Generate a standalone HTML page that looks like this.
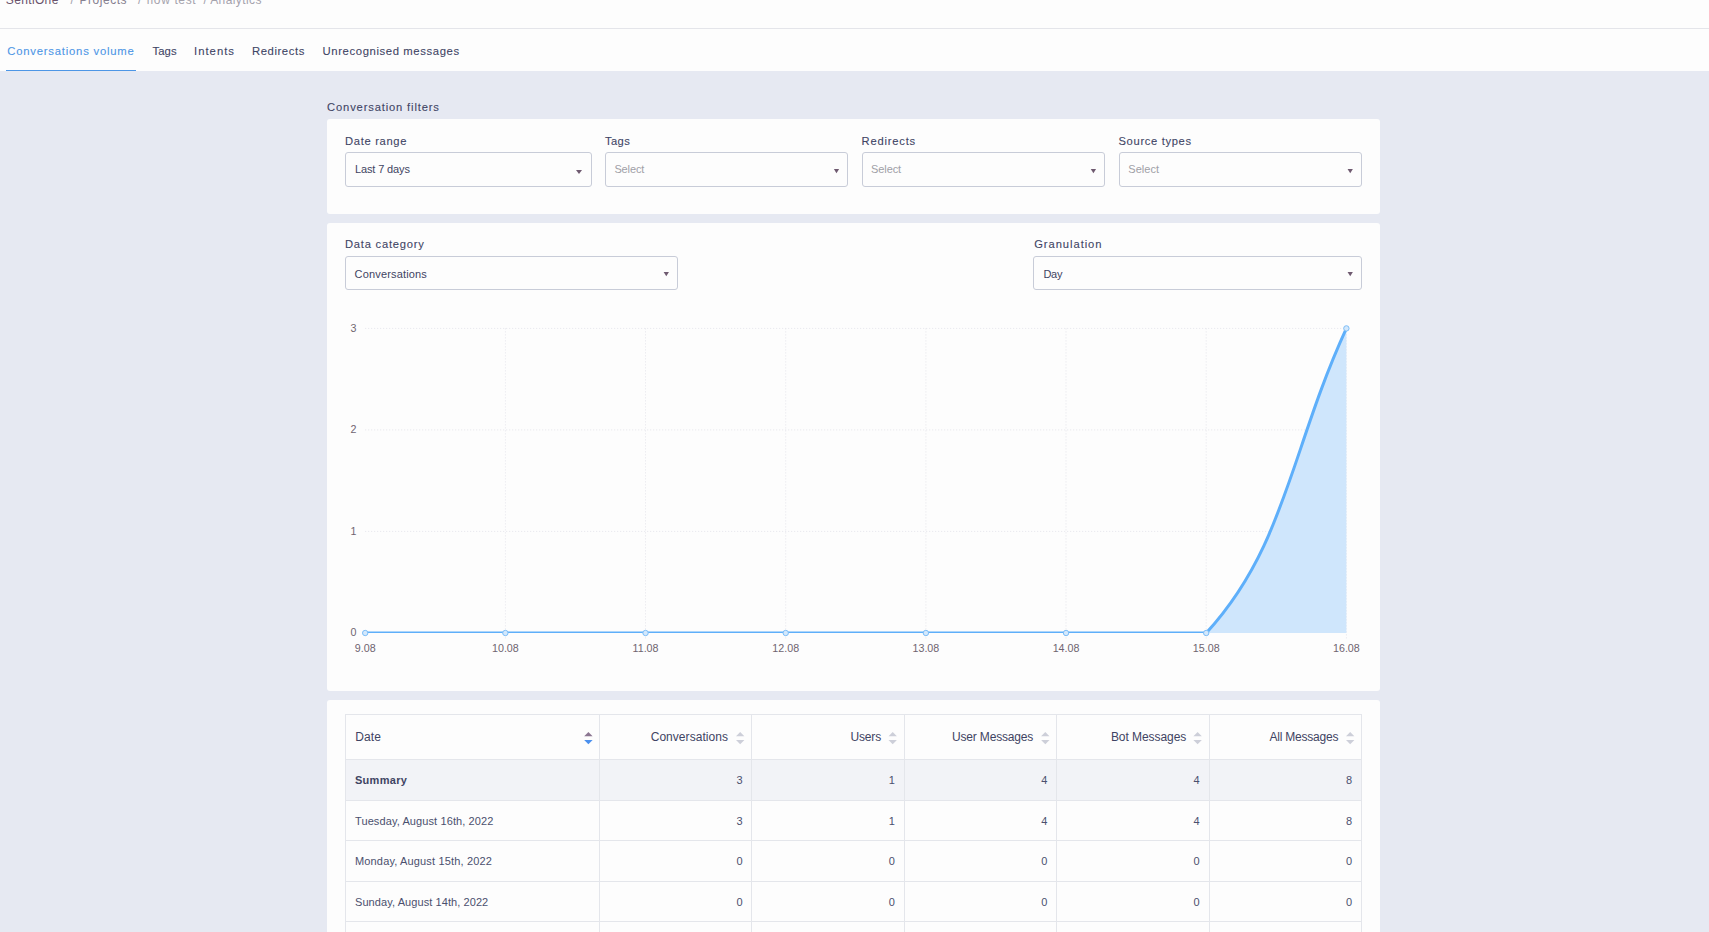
<!DOCTYPE html>
<html lang="en"><head><meta charset="utf-8"><title>Analytics</title>
<style>
html,body{margin:0;padding:0;}
body{width:1709px;height:932px;overflow:hidden;background:#e6e9f2;font-family:'Liberation Sans', sans-serif;position:relative;}
.b{position:absolute;}
.sel{border:1px solid #c8ccd8;border-radius:3px;background:#fdfdfd;}
.t{position:absolute;white-space:nowrap;line-height:20px;}
svg{position:absolute;left:0;top:0;}
</style></head>
<body>
<div class="b" style="left:0px;top:0px;width:1709px;height:71px;background:#fdfdfd;"></div>
<div class="b" style="left:0px;top:28px;width:1709px;height:1px;background:#e4e5ea;"></div>
<div class="b" style="left:6px;top:69.5px;width:130px;height:1.5px;background:#4d96e6;"></div>
<div class="b" style="left:327px;top:119px;width:1053px;height:95px;background:#fdfdfd;border-radius:3px;"></div>
<div class="b" style="left:327px;top:223px;width:1053px;height:468px;background:#fdfdfd;border-radius:3px;"></div>
<div class="b" style="left:327px;top:700px;width:1053px;height:260px;background:#fdfdfd;border-radius:3px;"></div>
<div class="b sel" style="left:345px;top:152px;width:245px;height:33px;"></div>
<div class="b sel" style="left:605px;top:152px;width:241px;height:33px;"></div>
<div class="b sel" style="left:862px;top:152px;width:241px;height:33px;"></div>
<div class="b sel" style="left:1119px;top:152px;width:241px;height:33px;"></div>
<div class="b sel" style="left:345px;top:256px;width:331px;height:32px;"></div>
<div class="b sel" style="left:1033px;top:256px;width:327px;height:32px;"></div>
<div class="b" style="left:346px;top:760px;width:1015px;height:40px;background:#f2f3f7;"></div>
<div class="b" style="left:345px;top:714px;width:1017px;height:1px;background:#e4e6eb;"></div>
<div class="b" style="left:345px;top:759px;width:1017px;height:1px;background:#e4e6eb;"></div>
<div class="b" style="left:345px;top:800px;width:1017px;height:1px;background:#e4e6eb;"></div>
<div class="b" style="left:345px;top:840px;width:1017px;height:1px;background:#e4e6eb;"></div>
<div class="b" style="left:345px;top:881px;width:1017px;height:1px;background:#e4e6eb;"></div>
<div class="b" style="left:345px;top:921px;width:1017px;height:1px;background:#e4e6eb;"></div>
<div class="b" style="left:345px;top:714px;width:1px;height:246px;background:#e4e6eb;"></div>
<div class="b" style="left:599px;top:714px;width:1px;height:246px;background:#e4e6eb;"></div>
<div class="b" style="left:751px;top:714px;width:1px;height:246px;background:#e4e6eb;"></div>
<div class="b" style="left:904px;top:714px;width:1px;height:246px;background:#e4e6eb;"></div>
<div class="b" style="left:1056px;top:714px;width:1px;height:246px;background:#e4e6eb;"></div>
<div class="b" style="left:1209px;top:714px;width:1px;height:246px;background:#e4e6eb;"></div>
<div class="b" style="left:1361px;top:714px;width:1px;height:246px;background:#e4e6eb;"></div>
<svg width="1709" height="932" viewBox="0 0 1709 932">
<path d="M576.00 169.9h6l-3.00 4.2z" fill="#6f5a70"/>
<path d="M833.85 169h5.3l-2.65 4.3z" fill="#6f5a70"/>
<path d="M1090.75 169h5.3l-2.65 4.3z" fill="#6f5a70"/>
<path d="M1347.55 169h5.3l-2.65 4.3z" fill="#6f5a70"/>
<path d="M663.65 271.9h5.3l-2.65 4.3z" fill="#6f5a70"/>
<path d="M1347.55 271.9h5.3l-2.65 4.3z" fill="#6f5a70"/>
<path d="M365.2 328.4H1346.4" stroke="#e4e4ea" stroke-width="1" stroke-dasharray="1 2" fill="none"/>
<path d="M365.2 429.9H1346.4" stroke="#e4e4ea" stroke-width="1" stroke-dasharray="1 2" fill="none"/>
<path d="M365.2 531.4H1346.4" stroke="#e4e4ea" stroke-width="1" stroke-dasharray="1 2" fill="none"/>
<path d="M505.4 328.4V640.0" stroke="#e4e4ea" stroke-width="1" stroke-dasharray="1 2" fill="none"/>
<path d="M645.5 328.4V640.0" stroke="#e4e4ea" stroke-width="1" stroke-dasharray="1 2" fill="none"/>
<path d="M785.7 328.4V640.0" stroke="#e4e4ea" stroke-width="1" stroke-dasharray="1 2" fill="none"/>
<path d="M925.9 328.4V640.0" stroke="#e4e4ea" stroke-width="1" stroke-dasharray="1 2" fill="none"/>
<path d="M1066.0 328.4V640.0" stroke="#e4e4ea" stroke-width="1" stroke-dasharray="1 2" fill="none"/>
<path d="M1206.2 328.4V640.0" stroke="#e4e4ea" stroke-width="1" stroke-dasharray="1 2" fill="none"/>
<path d="M1346.4 328.4V640.0" stroke="#e4e4ea" stroke-width="1" stroke-dasharray="1 2" fill="none"/>
<clipPath id="cl"><rect x="360.2" y="323.4" width="991.1899999999998" height="309.6"/></clipPath>
<path d="M1206.22 633.00C1285.30 547.08 1290.32 450.24 1346.39 328.40V633z" fill="#cfe6fc"/>
<path d="M365.20 633H1206.22C1285.30 547.08 1290.32 450.24 1346.39 328.40" fill="none" stroke="#5eaffa" stroke-width="3" stroke-linejoin="round" clip-path="url(#cl)"/>
<circle cx="365.20" cy="633" r="2.7" fill="#d3e8fc" stroke="#7dbef7" stroke-width="1"/>
<circle cx="505.37" cy="633" r="2.7" fill="#d3e8fc" stroke="#7dbef7" stroke-width="1"/>
<circle cx="645.54" cy="633" r="2.7" fill="#d3e8fc" stroke="#7dbef7" stroke-width="1"/>
<circle cx="785.71" cy="633" r="2.7" fill="#d3e8fc" stroke="#7dbef7" stroke-width="1"/>
<circle cx="925.88" cy="633" r="2.7" fill="#d3e8fc" stroke="#7dbef7" stroke-width="1"/>
<circle cx="1066.05" cy="633" r="2.7" fill="#d3e8fc" stroke="#7dbef7" stroke-width="1"/>
<circle cx="1206.22" cy="633" r="2.7" fill="#d3e8fc" stroke="#7dbef7" stroke-width="1"/>
<circle cx="1346.39" cy="328.4" r="2.7" fill="#d3e8fc" stroke="#7dbef7" stroke-width="1"/>
<path d="M584.20 736.2h8.4l-4.20 -4.2z" fill="#8b7691"/>
<path d="M584.20 740h8.4l-4.20 4.2z" fill="#4b90ee"/>
<path d="M736.00 736.2h8.4l-4.20 -4.2z" fill="#cdcfd9"/>
<path d="M736.00 740h8.4l-4.20 4.2z" fill="#cdcfd9"/>
<path d="M888.50 736.2h8.4l-4.20 -4.2z" fill="#cdcfd9"/>
<path d="M888.50 740h8.4l-4.20 4.2z" fill="#cdcfd9"/>
<path d="M1041.10 736.2h8.4l-4.20 -4.2z" fill="#cdcfd9"/>
<path d="M1041.10 740h8.4l-4.20 4.2z" fill="#cdcfd9"/>
<path d="M1193.40 736.2h8.4l-4.20 -4.2z" fill="#cdcfd9"/>
<path d="M1193.40 740h8.4l-4.20 4.2z" fill="#cdcfd9"/>
<path d="M1346.00 736.2h8.4l-4.20 -4.2z" fill="#cdcfd9"/>
<path d="M1346.00 740h8.4l-4.20 4.2z" fill="#cdcfd9"/>
</svg>
<span class="t" style="font-size:12px;color:#6a536c;top:-10.00px;left:5.80px;letter-spacing:0.356px;">SentiOne</span>
<span class="t" style="font-size:12px;color:#a5a3ad;top:-10.00px;left:70.40px;letter-spacing:0.756px;">/</span>
<span class="t" style="font-size:12px;color:#85808f;top:-10.00px;left:79.40px;letter-spacing:0.549px;">Projects</span>
<span class="t" style="font-size:12px;color:#a5a3ad;top:-10.00px;left:138.10px;letter-spacing:1.200px;">/</span>
<span class="t" style="font-size:12px;color:#a5a3ad;top:-10.00px;left:146.60px;letter-spacing:0.623px;">flow test</span>
<span class="t" style="font-size:12px;color:#a5a3ad;top:-10.00px;left:203.40px;letter-spacing:-0.600px;">/</span>
<span class="t" style="font-size:12px;color:#a5a3ad;top:-10.00px;left:210.20px;letter-spacing:0.416px;">Analytics</span>
<span class="t" style="font-size:11.3px;color:#4d96e6;top:41.00px;-webkit-text-stroke:0.1px #4d96e6;left:7.30px;letter-spacing:0.775px;">Conversations volume</span>
<span class="t" style="font-size:11.3px;color:#3f4565;top:41.00px;-webkit-text-stroke:0.1px #3f4565;left:152.42px;letter-spacing:0.135px;">Tags</span>
<span class="t" style="font-size:11.3px;color:#3f4565;top:41.00px;-webkit-text-stroke:0.1px #3f4565;left:194.00px;letter-spacing:1.013px;">Intents</span>
<span class="t" style="font-size:11.3px;color:#3f4565;top:41.00px;-webkit-text-stroke:0.1px #3f4565;left:251.90px;letter-spacing:0.593px;">Redirects</span>
<span class="t" style="font-size:11.3px;color:#3f4565;top:41.00px;-webkit-text-stroke:0.1px #3f4565;left:322.60px;letter-spacing:0.608px;">Unrecognised messages</span>
<span class="t" style="font-size:11.2px;color:#3f4565;top:97.00px;-webkit-text-stroke:0.1px #3f4565;left:327.10px;letter-spacing:0.845px;">Conversation filters</span>
<span class="t" style="font-size:11.2px;color:#3f4565;top:131.00px;-webkit-text-stroke:0.1px #3f4565;left:345.00px;letter-spacing:0.678px;">Date range</span>
<span class="t" style="font-size:11.2px;color:#3f4565;top:131.00px;-webkit-text-stroke:0.1px #3f4565;left:604.90px;letter-spacing:0.453px;">Tags</span>
<span class="t" style="font-size:11.2px;color:#3f4565;top:131.00px;-webkit-text-stroke:0.1px #3f4565;left:861.60px;letter-spacing:0.792px;">Redirects</span>
<span class="t" style="font-size:11.2px;color:#3f4565;top:131.00px;-webkit-text-stroke:0.1px #3f4565;left:1118.50px;letter-spacing:0.658px;">Source types</span>
<span class="t" style="font-size:11px;color:#3f4463;top:159.00px;left:355.00px;letter-spacing:-0.129px;">Last 7 days</span>
<span class="t" style="font-size:11px;color:#a0a0a7;top:159.00px;left:614.40px;letter-spacing:-0.116px;">Select</span>
<span class="t" style="font-size:11px;color:#a0a0a7;top:159.00px;left:871.10px;letter-spacing:-0.116px;">Select</span>
<span class="t" style="font-size:11px;color:#a0a0a7;top:159.00px;left:1128.30px;letter-spacing:0.044px;">Select</span>
<span class="t" style="font-size:11.2px;color:#3f4565;top:234.00px;-webkit-text-stroke:0.1px #3f4565;left:344.90px;letter-spacing:0.779px;">Data category</span>
<span class="t" style="font-size:11.2px;color:#3f4565;top:234.00px;-webkit-text-stroke:0.1px #3f4565;left:1034.22px;letter-spacing:0.944px;">Granulation</span>
<span class="t" style="font-size:11px;color:#3f4463;top:264.00px;left:354.60px;letter-spacing:0.164px;">Conversations</span>
<span class="t" style="font-size:11px;color:#3f4463;top:264.00px;left:1043.40px;letter-spacing:-0.281px;">Day</span>
<span class="t" style="font-size:12px;color:#3f4463;top:727.00px;left:355.20px;letter-spacing:0.147px;">Date</span>
<span class="t" style="font-size:12px;color:#3f4463;top:727.00px;left:650.70px;letter-spacing:0.043px;">Conversations</span>
<span class="t" style="font-size:12px;color:#3f4463;top:727.00px;left:850.60px;letter-spacing:-0.201px;">Users</span>
<span class="t" style="font-size:12px;color:#3f4463;top:727.00px;left:952.00px;letter-spacing:-0.168px;">User Messages</span>
<span class="t" style="font-size:12px;color:#3f4463;top:727.00px;left:1110.90px;letter-spacing:-0.059px;">Bot Messages</span>
<span class="t" style="font-size:12px;color:#3f4463;top:727.00px;left:1269.40px;letter-spacing:-0.207px;">All Messages</span>
<span class="t" style="font-size:11px;color:#3f4463;top:770.00px;font-weight:700;left:355px;letter-spacing:0.280px;">Summary</span>
<span class="t" style="font-size:11px;color:#4b506e;top:811.00px;left:355px;letter-spacing:0.104px;">Tuesday, August 16th, 2022</span>
<span class="t" style="font-size:11px;color:#4b506e;top:851.00px;left:355px;letter-spacing:0.154px;">Monday, August 15th, 2022</span>
<span class="t" style="font-size:11px;color:#4b506e;top:892.00px;left:355px;letter-spacing:0.081px;">Sunday, August 14th, 2022</span>
<span class="t" style="font-size:11px;color:#4b506e;top:770.00px;left:736.57px;">3</span>
<span class="t" style="font-size:11px;color:#4b506e;top:770.00px;left:888.77px;">1</span>
<span class="t" style="font-size:11px;color:#4b506e;top:770.00px;left:1041.17px;">4</span>
<span class="t" style="font-size:11px;color:#4b506e;top:770.00px;left:1193.47px;">4</span>
<span class="t" style="font-size:11px;color:#4b506e;top:770.00px;left:1345.97px;">8</span>
<span class="t" style="font-size:11px;color:#4b506e;top:811.00px;left:736.57px;">3</span>
<span class="t" style="font-size:11px;color:#4b506e;top:811.00px;left:888.77px;">1</span>
<span class="t" style="font-size:11px;color:#4b506e;top:811.00px;left:1041.17px;">4</span>
<span class="t" style="font-size:11px;color:#4b506e;top:811.00px;left:1193.47px;">4</span>
<span class="t" style="font-size:11px;color:#4b506e;top:811.00px;left:1345.97px;">8</span>
<span class="t" style="font-size:11px;color:#4b506e;top:851.00px;left:736.57px;">0</span>
<span class="t" style="font-size:11px;color:#4b506e;top:851.00px;left:888.77px;">0</span>
<span class="t" style="font-size:11px;color:#4b506e;top:851.00px;left:1041.17px;">0</span>
<span class="t" style="font-size:11px;color:#4b506e;top:851.00px;left:1193.47px;">0</span>
<span class="t" style="font-size:11px;color:#4b506e;top:851.00px;left:1345.97px;">0</span>
<span class="t" style="font-size:11px;color:#4b506e;top:892.00px;left:736.57px;">0</span>
<span class="t" style="font-size:11px;color:#4b506e;top:892.00px;left:888.77px;">0</span>
<span class="t" style="font-size:11px;color:#4b506e;top:892.00px;left:1041.17px;">0</span>
<span class="t" style="font-size:11px;color:#4b506e;top:892.00px;left:1193.47px;">0</span>
<span class="t" style="font-size:11px;color:#4b506e;top:892.00px;left:1345.97px;">0</span>
<span class="t" style="font-size:10.7px;color:#6f6470;top:638.00px;left:354.79px;">9.08</span>
<span class="t" style="font-size:10.7px;color:#6f6470;top:638.00px;left:492.00px;">10.08</span>
<span class="t" style="font-size:10.7px;color:#6f6470;top:638.00px;left:632.56px;">11.08</span>
<span class="t" style="font-size:10.7px;color:#6f6470;top:638.00px;left:772.34px;">12.08</span>
<span class="t" style="font-size:10.7px;color:#6f6470;top:638.00px;left:912.50px;">13.08</span>
<span class="t" style="font-size:10.7px;color:#6f6470;top:638.00px;left:1052.67px;">14.08</span>
<span class="t" style="font-size:10.7px;color:#6f6470;top:638.00px;left:1192.85px;">15.08</span>
<span class="t" style="font-size:10.7px;color:#6f6470;top:638.00px;left:1333.01px;">16.08</span>
<span class="t" style="font-size:10.7px;color:#6f6470;top:318.00px;left:350.55px;">3</span>
<span class="t" style="font-size:10.7px;color:#6f6470;top:419.00px;left:350.55px;">2</span>
<span class="t" style="font-size:10.7px;color:#6f6470;top:521.00px;left:350.55px;">1</span>
<span class="t" style="font-size:10.7px;color:#6f6470;top:622.00px;left:350.55px;">0</span>
</body></html>
